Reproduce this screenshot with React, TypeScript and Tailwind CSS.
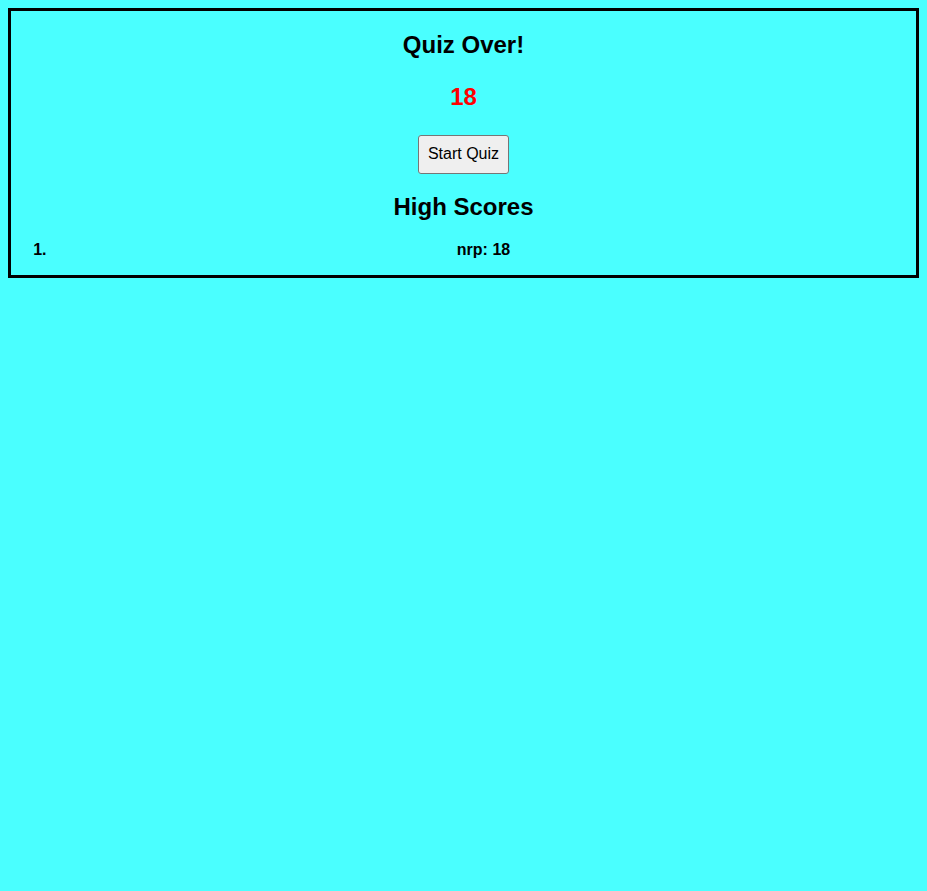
import React from 'react';

const scores = [{ name: 'nrp', score: 18 }];

const App: React.FC = () => {
  return (
    <div className="min-h-screen bg-[#4affff] p-2 font-['Liberation_Sans',Arial,sans-serif] text-black">
      <div className="border-[3px] border-black text-center">
        <h2 className="my-[19.92px] text-[24px] font-bold leading-[27.6px]">Quiz Over!</h2>
        <p className="my-6 text-[24px] font-bold leading-[27.6px] text-[#ff0000]">18</p>
        <div>
          <button className="mt-px rounded-[3px] border border-[#767676] bg-[#efefef] px-[9px] py-[9px] text-[16px] leading-[18.4px] text-black">
            Start Quiz
          </button>
        </div>
        <h2 className="my-[19.92px] text-[24px] font-bold leading-[27.6px]">High Scores</h2>
        <ol className="mb-4 list-decimal pl-10 font-bold text-[16px] leading-[18.4px]">
          {scores.map((s, i) => (
            <li key={i} className="marker:font-bold">
              {s.name}: {s.score}
            </li>
          ))}
        </ol>
      </div>
    </div>
  );
};

export default App;
